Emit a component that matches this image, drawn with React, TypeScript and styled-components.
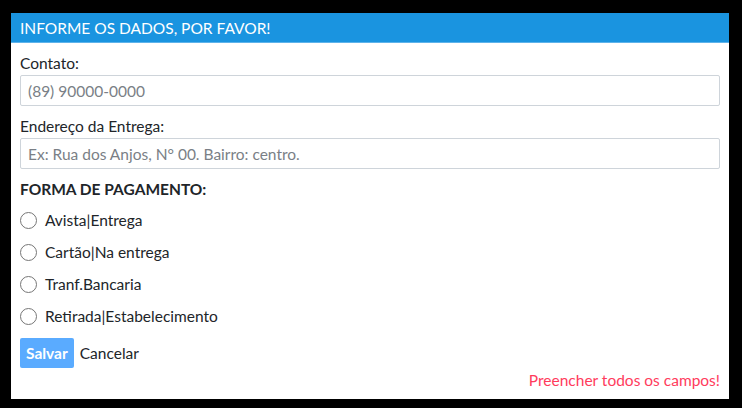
import React from "react";
import styled, { createGlobalStyle } from "styled-components";

const Global = createGlobalStyle`
  html, body { margin: 0; padding: 0; background: #000; }
  body { font-family: "Lato", "Open Sans", sans-serif; }
  * { box-sizing: border-box; }
`;

const Page = styled.div`
  width: 742px;
  height: 408px;
  padding: 13px 13px 9px 11px;
  background: #000;
`;

const Panel = styled.div`
  width: 718px;
  height: 386px;
  background: #fff;
  display: flex;
  flex-direction: column;
`;

const Header = styled.div`
  height: 30px;
  background: #1a94e0;
  color: #fff;
  font-size: 15.5px;
  display: flex;
  align-items: center;
  padding-left: 9px;
  border-bottom: 1px solid #5fb3ea;
`;

const Body = styled.div`
  padding: 9px 9px 0 9px;
  display: flex;
  flex-direction: column;
  color: #212529;
  font-size: 15.5px;
`;

const Label = styled.div`
  height: 22px;
  line-height: 22px;
  margin-bottom: 1px;
`;

const Input = styled.input<{ $mb: number }>`
  width: 700px;
  height: 31px;
  border: 1px solid #ced4da;
  border-radius: 2px;
  padding: 0 7px;
  font-family: inherit;
  font-size: 15.5px;
  color: #333;
  margin: 0 0 ${(p) => p.$mb}px 0;
  &::placeholder { color: #7a7f86; }
`;

const Section = styled.div`
  font-weight: 700;
  height: 22px;
  line-height: 22px;
  margin-bottom: 4px;
`;

const RadioRow = styled.label`
  display: flex;
  align-items: center;
  height: 32px;
  gap: 8px;
`;

const Circle = styled.span`
  width: 17px;
  height: 17px;
  border-radius: 50%;
  border: 1px solid #767676;
  flex: none;
`;

const Actions = styled.div`
  display: flex;
  align-items: center;
  gap: 6px;
  margin-top: 6px;
`;

const SaveBtn = styled.button`
  height: 30px;
  padding: 0 6px;
  background: #5aabff;
  border: none;
  border-radius: 2px;
  color: #fff;
  font-family: inherit;
  font-weight: 700;
  font-size: 15.5px;
`;

const CancelBtn = styled.span`
  color: #212529;
`;

const Error = styled.div`
  align-self: flex-end;
  color: #ff3b5c;
  margin-top: 1px;
  line-height: 22px;
`;

const options = [
  "Avista|Entrega",
  "Cartão|Na entrega",
  "Tranf.Bancaria",
  "Retirada|Estabelecimento",
];

export default function App() {
  return (
    <Page>
      <Global />
      <Panel>
        <Header>INFORME OS DADOS, POR FAVOR!</Header>
        <Body>
          <Label>Contato:</Label>
          <Input $mb={9} placeholder="(89) 90000-0000" />
          <Label>Endereço da Entrega:</Label>
          <Input $mb={9} placeholder="Ex: Rua dos Anjos, N° 00. Bairro: centro." />
          <Section>FORMA DE PAGAMENTO:</Section>
          {options.map((o) => (
            <RadioRow key={o}>
              <Circle />
              {o}
            </RadioRow>
          ))}
          <Actions>
            <SaveBtn>Salvar</SaveBtn>
            <CancelBtn>Cancelar</CancelBtn>
          </Actions>
          <Error>Preencher todos os campos!</Error>
        </Body>
      </Panel>
    </Page>
  );
}
